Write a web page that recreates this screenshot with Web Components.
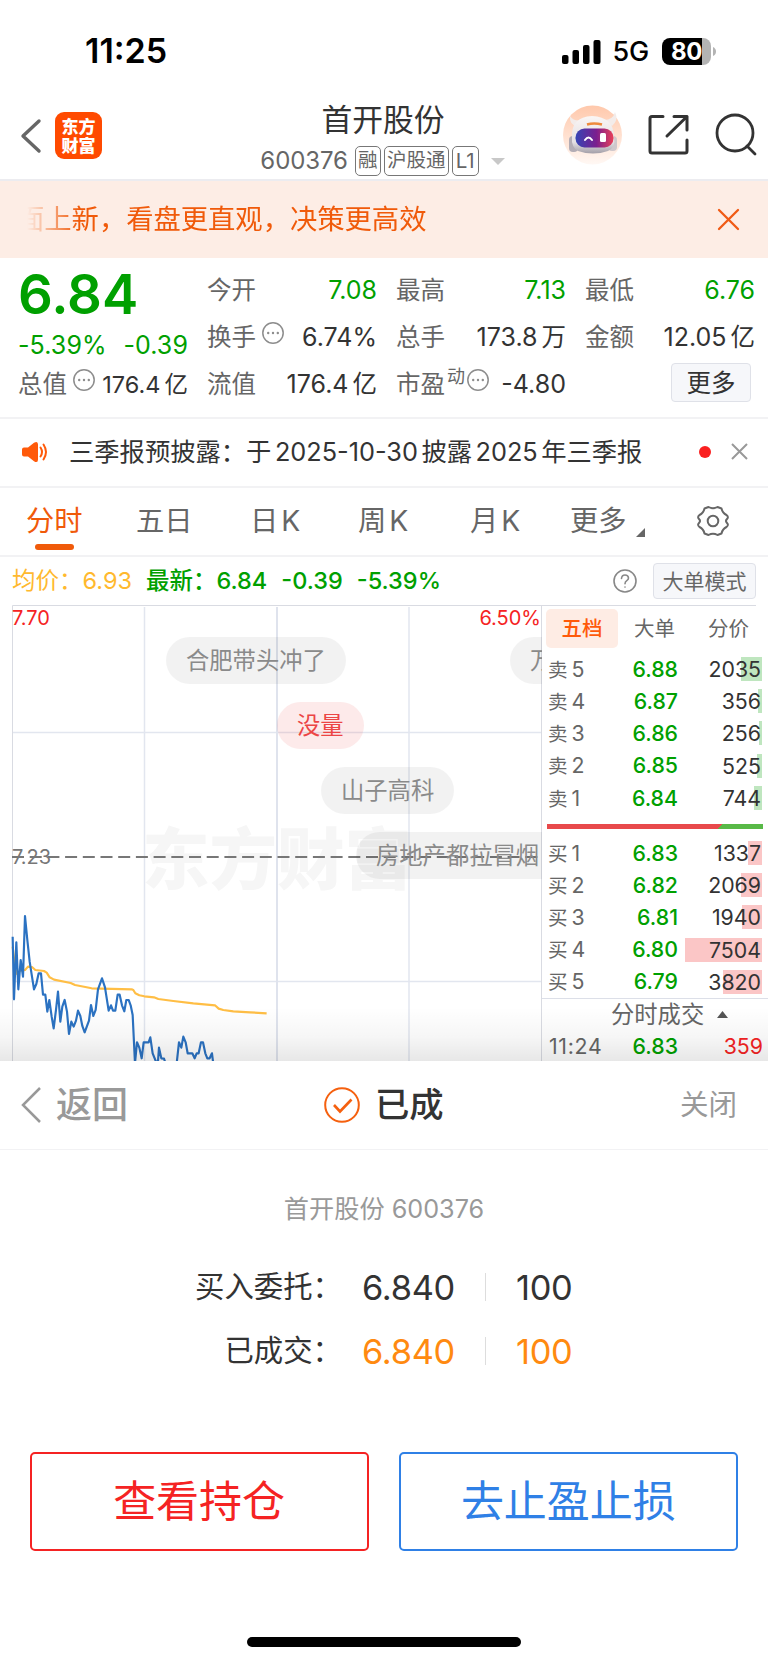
<!DOCTYPE html>
<html lang="zh-CN">
<head>
<meta charset="utf-8">
<title>首开股份 600376</title>
<style>
    body {
        margin: 0;
        width: 768px;
        height: 1663px;
        overflow: hidden;
        background: #fff;
        color: #333;
        font-family: Inter, "Noto Sans CJK SC", sans-serif;
        line-height: 1.25;
        --up: #f52323;
        --down: #00a000;
        --brand: #f05a0a;
        --line: #f2f2f4;
    }
</style>
</head>
<body>
<status-bar></status-bar>
<stock-header code="600376">首开股份</stock-header>
<promo-banner>面上新，看盘更直观，决策更高效</promo-banner>
<quote-panel></quote-panel>
<notice-bar></notice-bar>
<period-tabs></period-tabs>
<price-legend></price-legend>
<market-view>
    <minute-chart></minute-chart>
    <order-book></order-book>
</market-view>
<order-sheet></order-sheet>

<script>
class BaseElement extends HTMLElement {
    constructor() {
        super();
        this.attachShadow({ mode: 'open' });
    }

    connectedCallback() {
        this.shadowRoot.innerHTML = `
            <style>
                :host { display: block; box-sizing: border-box; white-space: nowrap; }
                * { box-sizing: border-box; }
                svg { display: block; flex: none; overflow: visible; }
            </style>
            ${this.render()}
        `;
    }
}

class StatusBar extends BaseElement {
    render() {
        return `
            <style>
                :host { display: flex; align-items: center; height: 90px; padding: 13px 52px 0 85px; color: #000; }
                .time { font-size: 34px; font-weight: 600; letter-spacing: 0; flex: 1; }
                .net { font-size: 27px; font-weight: 500; margin: 0 13px 0 12px; letter-spacing: -0.2px; }
                .battery { display: flex; align-items: center; }
                .level {
                    width: 49px; height: 27px; border-radius: 8px; color: #fff;
                    background: linear-gradient(90deg, #000 40px, #b3b3b3 40px);
                    font-size: 24px; font-weight: 700; line-height: 27px; text-align: center; letter-spacing: -0.5px;
                }
            </style>
            <span class="time">11:25</span>
            <svg width="39" height="24">
                <rect x="0" y="15" width="6.5" height="9" rx="2"/>
                <rect x="10.5" y="10" width="6.5" height="14" rx="2"/>
                <rect x="21" y="5" width="6.5" height="19" rx="2"/>
                <rect x="31.5" y="0" width="7" height="24" rx="2"/>
            </svg>
            <span class="net">5G</span>
            <div class="battery">
                <div class="level">80</div>
                <svg width="5" height="9"><path d="M2 0q3 1.5 3 4.5t-3 4.5z" fill="#b3b3b3"/></svg>
            </div>
        `;
    }
}

class StockHeader extends BaseElement {
    render() {
        return `
            <style>
                :host {
                    display: grid; grid-template-columns: 240px 1fr 240px; height: 91px;
                    border-bottom: 2px solid #ececf0;
                }
                .left { display: flex; align-items: center; padding: 2px 0 0 21px; gap: 14px; }
                .logo {
                    width: 47px; height: 47px; border-radius: 9px; background: #ff4a00; color: #fff;
                    font: 900 17px/19px "Noto Sans CJK SC", sans-serif; text-align: center; padding-top: 4px;
                }
                .middle { display: flex; flex-direction: column; align-items: center; padding-top: 12px; }
                h1 { margin: 0 2px 0 0; font-size: 30.8px; line-height: 36px; font-weight: 400; }
                .sub { display: flex; align-items: center; height: 30px; margin: 8px 3px 0 0; color: #666; }
                .code { font-size: 24px; letter-spacing: -0.1px; margin-right: 7px; }
                .tag {
                    border: 1.5px solid #777; border-radius: 5px; height: 30px; line-height: 27px;
                    font-size: 19.5px; padding: 0 2.2px; margin-right: 3px;
                }
                .l1 { font-size: 20.5px; padding: 0 3px; }
                .sub svg { margin-left: 9px; }
                .right { display: flex; align-items: center; padding: 1px 12px 0 35px; justify-content: space-between; }
            </style>
            <div class="left">
                <svg width="20" height="34" fill="none" stroke="#666" stroke-width="3.4" stroke-linecap="round" stroke-linejoin="round">
                    <path d="M18 2 2 17l16 15"/>
                </svg>
                <div class="logo">东方<br>财富</div>
            </div>
            <div class="middle">
                <h1><slot></slot></h1>
                <div class="sub">
                    <span class="code">${this.getAttribute('code')}</span>
                    <span class="tag">融</span><span class="tag">沪股通</span><span class="tag l1">L1</span>
                    <svg width="14" height="7"><path d="M0 0h14L7 7z" fill="#c8c8c8"/></svg>
                </div>
            </div>
            <div class="right">
                <svg width="59" height="60" viewBox="0 0 59 60">
                    <defs>
                        <linearGradient id="halo" x2="0" y2="1"><stop stop-color="#ffc8ab"/><stop offset="1" stop-color="#fff8f4"/></linearGradient>
                        <linearGradient id="visor"><stop stop-color="#3545b5"/><stop offset=".55" stop-color="#7b1e8e"/><stop offset="1" stop-color="#e94058"/></linearGradient>
                        <linearGradient id="shell" x2="0" y2="1"><stop stop-color="#faf6f5"/><stop offset=".7" stop-color="#e4e0e3"/><stop offset="1" stop-color="#a39fa8"/></linearGradient>
                    </defs>
                    <circle cx="29.5" cy="30" r="29.5" fill="url(#halo)"/>
                    <path d="M7 11q-1 9 8 11l5-7q-9 2-13-4zM52 7q4 8-3 14l-8-6q9 0 11-8z" fill="#f3ecea"/>
                    <rect x="6" y="31" width="9" height="16" rx="4" fill="#b3adb5"/>
                    <rect x="45" y="31" width="9" height="15" rx="4" fill="#cfc8cc"/>
                    <path d="M9 32Q8 12 29 11Q51 12 51 32Q53 42 45 46Q30 51 15 46Q8 42 9 32z" fill="url(#shell)"/>
                    <rect x="12.5" y="23.5" width="38" height="19" rx="9" fill="url(#visor)"/>
                    <path d="M24 19.500q7-2 15 0" stroke="#ee8a3d" stroke-width="2.5" fill="none"/>
                    <path d="M22 35q3.500-5 7 0" stroke="#fff" stroke-width="2" fill="none" stroke-linecap="round"/>
                    <rect x="37" y="28" width="6" height="9" rx="1.5" fill="#fff"/>
                </svg>
                <svg width="41" height="40" fill="none" stroke="#333" stroke-width="3" stroke-linecap="round" stroke-linejoin="round">
                    <path d="M15 1.500H4Q2 1.500 2 3.500V36q0 2 2 2h33q2 0 2-2V25M26 1.500h13V15M39 1.500 19 21"/>
                </svg>
                <svg width="41" height="40" fill="none" stroke="#333" stroke-width="2.8" stroke-linecap="round">
                    <circle cx="20" cy="18" r="18"/><path d="m32 31 8 8"/>
                </svg>
            </div>
        `;
    }
}

class PromoBanner extends BaseElement {
    render() {
        return `
            <style>
                :host {
                    display: flex; align-items: center; justify-content: space-between; height: 77px;
                    background: #fdede5; padding: 0 30px 0 17px; color: var(--brand);
                }
                p {
                    margin: 0; font-size: 27.3px; line-height: 40px;
                    mask-image: linear-gradient(90deg, transparent 10px, #000 62px);
                }
            </style>
            <p><slot></slot></p>
            <svg width="19" height="19" stroke="#f05a14" stroke-width="2.3" stroke-linecap="round"><path d="m0 0 19 19M19 0 0 19"/></svg>
        `;
    }
}

const infoIcon = `
    <svg class="info" width="22" height="22" fill="none" stroke="#8d8d8d" stroke-width="1.5">
        <circle cx="11" cy="11" r="10.2"/>
        <path d="M6.200 11h.01M11 11h.01M15.800 11h.01" stroke-width="2.4" stroke-linecap="round"/>
    </svg>`;

// One label/value pair; "unit" is the 亿 or 万 behind the number.
class QuoteCell extends BaseElement {
    render() {
        const note = this.getAttribute('note');
        const unit = this.getAttribute('unit');
        return `
            <style>
                :host { display: flex; height: 47px; align-items: center; font-size: 24.5px; color: #333; }
                .label { color: #666; }
                sup { font-size: 18px; line-height: 20px; align-self: flex-start; margin: 6px 0 0 2px; color: #666; }
                .info { align-self: flex-start; margin: 8px 0 0 var(--info-gap, 6px); }
                .value { margin-left: auto; font-size: var(--value-size, 25px); }
                .unit { margin-left: 4px; font-size: var(--value-size, 24.5px); }
                :host([tone="down"]) .value { color: var(--down); }
            </style>
            <span class="label">${this.getAttribute('label')}</span>
            ${note ? `<sup>${note}</sup>` : ''}
            ${this.hasAttribute('info') ? infoIcon : ''}
            <span class="value">${this.getAttribute('value')}</span>
            ${unit ? `<span class="unit">${unit}</span>` : ''}
        `;
    }
}

class QuotePanel extends BaseElement {
    render() {
        return `
            <style>
                :host {
                    display: grid; grid-template-columns: 170px 170px 170px 170px; column-gap: 19px;
                    height: 161px; padding: 9px 0 0 18px; border-bottom: 2px solid var(--line);
                }
                .price { font-size: 54.5px; font-weight: 600; line-height: 54px; height: 53px; color: var(--down); }
                .change { display: flex; justify-content: space-between; font-size: 25px; line-height: 50px; height: 41px; color: var(--down); letter-spacing: 0.1px; }
                button {
                    width: 80px; height: 39px; margin: 2px 0 0 86px; padding: 0; border: 1.5px solid #dfe1e8; border-radius: 4px;
                    background: #f6f7fa; color: #333; font: inherit; font-size: 24.5px; line-height: 36px;
                }
            </style>
            <div>
                <div class="price">6.84</div>
                <div class="change"><span>-5.39%</span><span>-0.39</span></div>
                <quote-cell label="总值" info value="176.4" unit="亿" style="--value-size:23.5px"></quote-cell>
            </div>
            <div>
                <quote-cell label="今开" value="7.08" tone="down"></quote-cell>
                <quote-cell label="换手" info value="6.74%"></quote-cell>
                <quote-cell label="流值" value="176.4" unit="亿"></quote-cell>
            </div>
            <div>
                <quote-cell label="最高" value="7.13" tone="down"></quote-cell>
                <quote-cell label="总手" value="173.8" unit="万"></quote-cell>
                <quote-cell label="市盈" note="动" info value="-4.80" style="--info-gap:2px"></quote-cell>
            </div>
            <div>
                <quote-cell label="最低" value="6.76" tone="down"></quote-cell>
                <quote-cell label="金额" value="12.05" unit="亿"></quote-cell>
                <button>更多</button>
            </div>
        `;
    }
}

class NoticeBar extends BaseElement {
    render() {
        return `
            <style>
                :host { display: flex; align-items: center; height: 69px; padding: 0 21px 2px 22px; border-bottom: 2px solid var(--line); }
                p { margin: 0 0 0 22px; font-size: 25.3px; flex: 1; }
                b { font-weight: 400; margin: 0 3.5px; }
                .dot { width: 12px; height: 12px; border-radius: 50%; background: #fa2020; margin-right: 21px; }
            </style>
            <svg width="25" height="20" fill="#ff5a0a">
                <path d="M0 7.500Q0 5.500 2 5.500h4L12 .8Q16 -1.500 16 2.500v15q0 4-4 1.700L6 14.500H2q-2 0-2-2z"/>
                <path d="M18.500 5.500q3 4.500 0 9M21.500 2.500q5 7.500 0 15" fill="none" stroke="#ff5a0a" stroke-width="2" stroke-linecap="round"/>
            </svg>
            <p>三季报预披露：于<b>2025-10-30</b>披露<b>2025</b>年三季报</p>
            <span class="dot"></span>
            <svg width="15" height="15" stroke="#999" stroke-width="2"><path d="m0 0 15 15M15 0 0 15"/></svg>
        `;
    }
}

class PeriodTabs extends BaseElement {
    render() {
        return `
            <style>
                :host {
                    display: flex; align-items: center; height: 69px; padding: 0 0 0 26px; font-size: 28.3px;
                    border-bottom: 2px solid var(--line); color: #666;
                }
                span { width: 109px; line-height: 67px; height: 67px; }
                i { font-style: normal; margin-left: 3px; }
                .on { color: var(--brand); }
                .on::after {
                    content: ""; display: block; width: 39px; height: 6px; margin: -11px 0 0 9px;
                    border-radius: 3px; background: var(--brand);
                }
            </style>
            <span class="on" style="width:110px">分时</span>
            <span style="width:114px">五日</span>
            <span style="width:108px">日<i>K</i></span>
            <span style="width:112px">周<i>K</i></span>
            <span style="width:100px">月<i>K</i></span>
            <span style="width:64px">更多</span>
            <svg width="9" height="9" style="margin:21px 52px 0 2px"><path d="M9 0v9H0z" fill="#666"/></svg>
            <svg width="32" height="32" viewBox="-16 -15 32 32" fill="none" stroke="#666" stroke-width="2" stroke-linejoin="round">
                <path d="M-4.500 -14 Q0 -11.500 4.500 -14 L8.500 -12.500 Q9.500 -8 13.500 -6 Q16 -4 14 -2 Q12 0 14 2 Q16 4 13.500 6 Q9.500 8 8.500 12.500 L4.500 14 Q0 11.500 -4.500 14 L-8.500 12.500 Q-9.500 8 -13.500 6 Q-16 4 -14 2 Q-12 0 -14 -2 Q-16 -4 -13.500 -6 Q-9.500 -8 -8.500 -12.500z"/>
                <circle r="5.3"/>
            </svg>
        `;
    }
}

class PriceLegend extends BaseElement {
    render() {
        return `
            <style>
                :host { display: flex; align-items: center; height: 48px; padding: 0 12px; font-size: 23.5px; color: var(--down); }
                .avg { color: #ffb92e; margin-right: 14px; }
                .last { font-weight: 450; margin-right: 14px; }
                .name { font-weight: 500; }
                .help { margin: 0 16px 0 auto; }
                button {
                    width: 103px; height: 36px; padding: 0; border: 1.5px solid #dfe1e8; border-radius: 4px;
                    background: #f6f7fa; color: #666; font: inherit; font-size: 21px; line-height: 33px;
                }
            </style>
            <span class="avg">均价：6.93</span>
            <span class="last"><span class="name">最新：</span>6.84</span>
            <span class="last">-0.39</span>
            <span class="last">-5.39%</span>
            <svg class="help" width="24" height="24" fill="none" stroke="#888" stroke-width="1.6" stroke-linecap="round">
                <circle cx="12" cy="12" r="11"/>
                <path d="M8.500 9.500q.3-3.500 3.500-3.500t3.500 3q0 1.600-1.700 2.700T12 14.800M12 18v.1"/>
            </svg>
            <button>大单模式</button>
        `;
    }
}

class MarketView extends BaseElement {
    render() {
        return `
            <style>
                :host { display: grid; grid-template-columns: 542px minmax(0, 1fr); height: 456px; overflow: hidden; position: relative; }
                .shade {
                    position: absolute; left: 0; right: 0; bottom: 0; height: 54px;
                    background: linear-gradient(transparent, rgba(0, 0, 0, .035) 55%, rgba(0, 0, 0, .095));
                }
            </style>
            <slot></slot>
            <div class="shade"></div>
        `;
    }
}

class ChatBubble extends BaseElement {
    render() {
        return `
            <style>
                :host {
                    height: 47px; line-height: 48px; padding: 0 20px; border-radius: 24px;
                    font-size: 23.3px; color: #8a8a8a; background: rgba(0, 0, 0, .05);
                }
                :host([hot]) { color: #ec4545; background: rgba(240, 60, 60, .11); }
            </style>
            <slot></slot>
        `;
    }
}

class MinuteChart extends BaseElement {
    render() {
        return `
            <style>
                :host { position: relative; height: 456px; overflow: hidden; }
                text { font-size: 20px; }
                chat-bubble { position: absolute; }
            </style>
            <svg width="542" height="456" viewBox="0 605 542 456" fill="none">
                <text x="142" y="884" style="font-size:67.5px;font-weight:900" fill="#f6f6f6">东方财富</text>
                <path d="M144.500 607v454M409 607v454M12 732.500h530M12 981.500h530" stroke="#e2e6ef" stroke-width="1.5"/>
                <path d="M277 607v454" stroke="#dfe3ed" stroke-width="2"/>
                <path d="M12.500 1061V605.500H542M541.500 605v456" stroke="#d9dbe2"/>
                <path d="M12 857H542" stroke="#777" stroke-width="2.2" stroke-dasharray="12 5.7"/>
                <g transform="translate(0 780) scale(.3333)" stroke-linejoin="round">
                    <polyline stroke="#ffbe45" stroke-width="6.5" points="38,500 45,560 51,582 60,572 75,570 84,560 96,561 106,570 132,573 140,578 149,592 162,599 212,609 225,615 256,621 275,625 395,628 400,630 406,640 418,646 433,649 462,652 475,657 520,663 580,670 645,676 656,686 670,690 700,694 750,697 800,700"/>
                    <polyline stroke="#2b72c2" stroke-width="6.5" points="38,470 42,658 49,487 55,628 62,540 69,590 75,408 82,480 89,545 96,590 102,628 109,612 116,580 123,580 129,644 136,644 142,695 148,660 155,710 161,745 168,690 174,635 181,725 187,680 194,660 201,695 207,762 214,725 221,740 228,722 234,692 241,708 247,738 254,757 267,722 273,675 280,708 287,690 294,628 306,595 315,622 326,692 333,676 339,692 346,692 353,644 359,644 366,676 373,694 379,660 386,660 392,676 398,705 405,850 411,787 418,803 425,835 431,787 446,787 451,772 458,820 468,845 474,845 477,803 484,835 492,836 500,860 529,860 537,787 544,803 550,770 557,787 563,820 577,820 584,835 590,820 596,820 603,787 609,787 616,820 622,835 629,835 636,820 641,860"/>
                </g>
                <text x="12" y="625" fill="#f52323">7.70</text>
                <text x="541" y="625" fill="#f52323" text-anchor="end">6.50%</text>
                <text x="12" y="863.5" fill="#777">7.23</text>
            </svg>
            <chat-bubble style="left:166px;top:32px">合肥带头冲了</chat-bubble>
            <chat-bubble style="left:510px;top:32px">万</chat-bubble>
            <chat-bubble style="left:277px;top:97px" hot>没量</chat-bubble>
            <chat-bubble style="left:321px;top:162px">山子高科</chat-bubble>
            <chat-bubble style="left:356px;top:227px;width:220px">房地产都拉冒烟</chat-bubble>
        `;
    }
}

// side: sell | buy, bar: width of the volume bar in px
class BookLevel extends BaseElement {
    render() {
        const name = this.getAttribute('side') === 'sell' ? '卖' : '买';
        return `
            <style>
                :host {
                    display: grid; grid-template-columns: 40px 90px 1fr; align-items: center;
                    height: 32.2px; padding: 0 6px; font-size: 21.3px;
                    --bar: #bfe6bf;
                }
                :host([side="buy"]) { --bar: #fbc6c6; }
                .name { color: #666; font-size: 19.5px; }
                .name i { font-style: normal; margin-left: 4px; font-size: 21.3px; }
                .price { color: var(--down); text-align: right; font-weight: 450; }
                .vol {
                    text-align: right; line-height: 24px; padding-right: 1px;
                    background: linear-gradient(var(--bar), var(--bar)) right / ${this.getAttribute('bar')}px 100% no-repeat;
                }
            </style>
            <span class="name">${name}<i>${this.getAttribute('level')}</i></span>
            <span class="price">${this.getAttribute('price')}</span>
            <span class="vol">${this.getAttribute('vol')}</span>
        `;
    }
}

const SELLS = [[5, '6.88', 2035, 21], [4, '6.87', 356, 4], [3, '6.86', 256, 3], [2, '6.85', 525, 5.5], [1, '6.84', 744, 8]];
const BUYS = [[1, '6.83', 1337, 14], [2, '6.82', 2069, 21], [3, '6.81', 1940, 20], [4, '6.80', 7504, 77], [5, '6.79', 3820, 39]];

class OrderBook extends BaseElement {
    levels(side, rows) {
        return rows.map(([level, price, vol, bar]) =>
            `<book-level side="${side}" level="${level}" price="${price}" vol="${vol}" bar="${bar}"></book-level>`).join('');
    }

    render() {
        return `
            <style>
                :host { height: 456px; }
                .tabs { display: flex; height: 48px; padding: 3px 0 0 4px; font-size: 20.5px; color: #666; line-height: 39px; border-top: 1px solid #d9dbe2; margin-right: 12px; }
                .tabs span { flex: none; width: 72px; height: 39px; border-radius: 5px; text-align: center; margin-right: 1px; }
                .tabs .on { background: #feece4; color: #ff5a0a; font-weight: 500; }
                .ratio { height: 5px; margin: 10px 5px 8px; background: linear-gradient(135deg, #e8494b 0 124px, #58b947 124px); }
                .deals { border-top: 1.5px solid #dcdfe8; display: flex; align-items: center; height: 33px; padding-left: 69px; font-size: 23.3px; color: #666; gap: 13px; }
                .deal { display: grid; grid-template-columns: 60px 69px 1fr; padding: 0 5px 0 7px; font-size: 21.3px; line-height: 31px; color: #666; }
                .deal span:first-child { letter-spacing: 0.7px; }
                .deal span + span { text-align: right; color: var(--down); font-weight: 450; }
                .deal span:last-child { color: var(--up); font-weight: 400; }
            </style>
            <div class="tabs"><span class="on">五档</span><span style="width:71px">大单</span><span style="width:75px">分价</span></div>
            ${this.levels('sell', SELLS)}
            <div class="ratio"></div>
            ${this.levels('buy', BUYS)}
            <div class="deals">分时成交<svg width="11" height="7"><path d="M0 7h11L5.500 0z" fill="#555"/></svg></div>
            <div class="deal"><span>11:24</span><span>6.83</span><span>359</span></div>
        `;
    }
}

class OrderSheet extends BaseElement {
    render() {
        return `
            <style>
                :host { height: 602px; background: #fff; }
                header {
                    display: grid; grid-template-columns: 303px 1fr 200px; align-items: center; height: 89px;
                    padding: 0 31px 0 21px; border-bottom: 1.5px solid var(--line);
                }
                .back { display: flex; align-items: center; gap: 15px; font-size: 36px; font-weight: 500; color: #999; }
                .state { display: flex; align-items: center; gap: 15px; font-size: 34.3px; font-weight: 500; }
                .close { text-align: right; font-size: 28.5px; color: #999; }
                .stock { text-align: center; font-size: 25.2px; line-height: 36px; margin: 41px 0 28px; color: #999; }
                .row { display: grid; grid-template-columns: 342px 143px 1px 1fr; height: 64px; align-items: center; }
                .row label { text-align: right; font-size: 29.4px; }
                .row span { font-size: 34.4px; padding-left: 20px; letter-spacing: -0.3px; }
                .row hr { width: 1px; height: 28px; margin: 0; border: 0; background: #ddd; }
                .row span:last-child { padding-left: 30px; }
                .filled span { color: #ff8a10; }
                .actions { display: grid; grid-template-columns: 1fr 1fr; gap: 30px; padding: 0 30px 0 29.5px; margin-top: 69px; }
                button {
                    height: 99px; border: 2px solid; border-radius: 5px; background: #fff; padding: 0;
                    font: inherit; font-size: 43px; color: var(--up);
                }
                button + button { color: #2f80e6; }
                .home { width: 274px; height: 10px; border-radius: 5px; background: #000; margin: 86px auto 0; }
            </style>
            <header>
                <div class="back">
                    <svg width="20" height="36" fill="none" stroke="#999" stroke-width="2.5"><path d="M19 1 2 18l17 17"/></svg>返回
                </div>
                <div class="state">
                    <svg width="36" height="36" fill="none" stroke="#f5600f" stroke-width="2">
                        <circle cx="18" cy="18" r="16.8"/>
                        <path d="m10 18 6 6.500 11.500-12" stroke-width="2.6"/>
                    </svg>已成
                </div>
                <div class="close">关闭</div>
            </header>
            <div class="stock">首开股份 600376</div>
            <div class="row"><label>买入委托：</label><span>6.840</span><hr><span>100</span></div>
            <div class="row filled"><label>已成交：</label><span>6.840</span><hr><span>100</span></div>
            <div class="actions"><button>查看持仓</button><button>去止盈止损</button></div>
            <div class="home"></div>
        `;
    }
}

customElements.define("status-bar", StatusBar);
customElements.define("stock-header", StockHeader);
customElements.define("promo-banner", PromoBanner);
customElements.define("quote-cell", QuoteCell);
customElements.define("quote-panel", QuotePanel);
customElements.define("notice-bar", NoticeBar);
customElements.define("period-tabs", PeriodTabs);
customElements.define("price-legend", PriceLegend);
customElements.define("market-view", MarketView);
customElements.define("chat-bubble", ChatBubble);
customElements.define("minute-chart", MinuteChart);
customElements.define("book-level", BookLevel);
customElements.define("order-book", OrderBook);
customElements.define("order-sheet", OrderSheet);
</script>
</body>
</html>
